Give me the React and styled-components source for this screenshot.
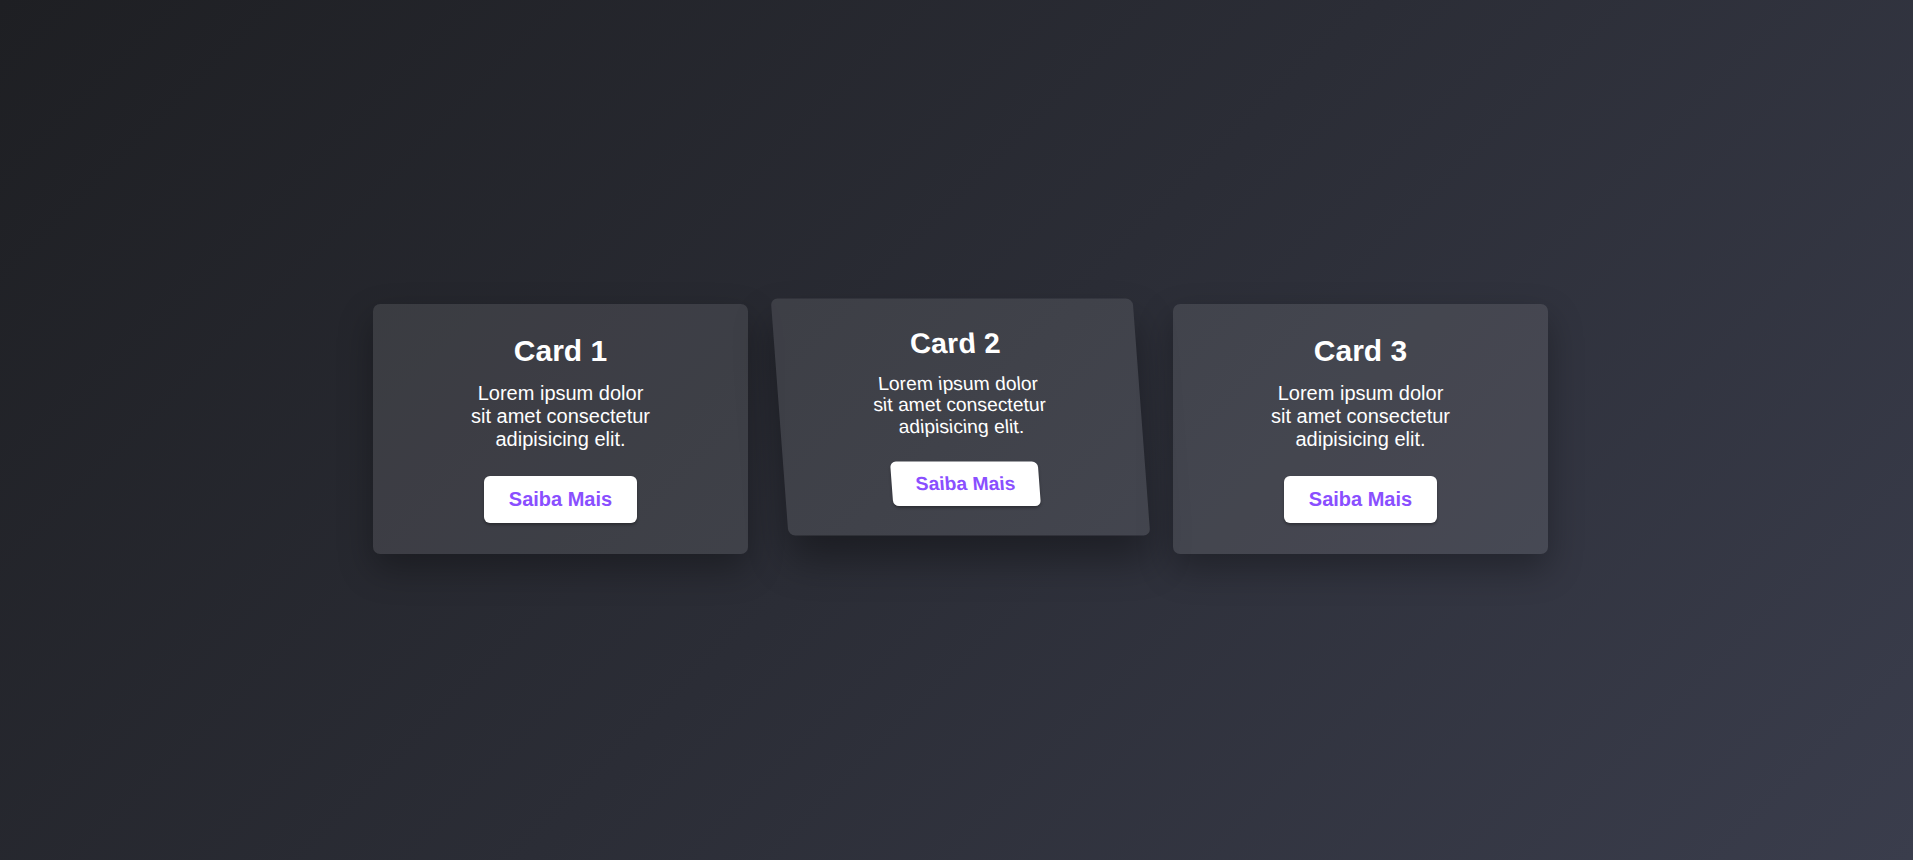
import styled, { createGlobalStyle } from 'styled-components';

const GlobalStyle = createGlobalStyle`
  * {
    box-sizing: border-box;
  }
  html, body {
    margin: 0;
    padding: 0;
  }
  body {
    font-family: "Liberation Sans", Arial, sans-serif;
    background: linear-gradient(135deg, #1e1f23 0%, #2b2d36 50%, #3a3d4c 100%);
    min-height: 100vh;
    overflow: hidden;
  }
`;

const cards = [
  { id: 1, title: 'Card 1' },
  { id: 2, title: 'Card 2', hovered: true },
  { id: 3, title: 'Card 3' },
];

const App = () => {
  return (
    <>
      <GlobalStyle />
      <Page>
        <Row>
          {cards.map(card => (
            <Card key={card.id} $hovered={card.hovered}>
              <Title>{card.title}</Title>
              <Text>Lorem ipsum dolor sit amet consectetur adipisicing elit.</Text>
              <Button>Saiba Mais</Button>
            </Card>
          ))}
        </Row>
      </Page>
    </>
  );
};

const Page = styled.main`
  display: flex;
  align-items: center;
  justify-content: center;
  width: 100%;
  height: 858px;
  padding-left: 8px;
`;

const Row = styled.div`
  display: flex;
  gap: 25px;
`;

const Card = styled.div`
  display: flex;
  flex-direction: column;
  align-items: center;
  width: 375px;
  height: 250px;
  padding: 30px 20px 0;
  border-radius: 7px;
  background: rgba(255, 255, 255, 0.1);
  box-shadow: 0 15px 35px rgba(0, 0, 0, 0.3);
  color: #fff;
  text-align: center;
  transform: ${({ $hovered }) =>
    $hovered ? 'translateY(-12px) scale(0.965, 0.948) skewX(4.2deg)' : 'none'};
  ${({ $hovered }) => $hovered && 'box-shadow: 0 25px 40px rgba(0, 0, 0, 0.35);'}
`;

const Title = styled.h2`
  margin: 0 0 14px;
  font-size: 30px;
  font-weight: 700;
`;

const Text = styled.p`
  width: 185px;
  margin: 0 0 25px;
  font-size: 20px;
  line-height: 23px;
`;

const Button = styled.button`
  padding: 12px 25px;
  border: none;
  border-radius: 6px;
  background: #fff;
  color: #8a4fff;
  font-family: "Liberation Sans", Arial, sans-serif;
  font-size: 20px;
  font-weight: 700;
  line-height: 23px;
  box-shadow: 0 2px 3px rgba(0, 0, 0, 0.3);
  cursor: pointer;
`;

export default App;
